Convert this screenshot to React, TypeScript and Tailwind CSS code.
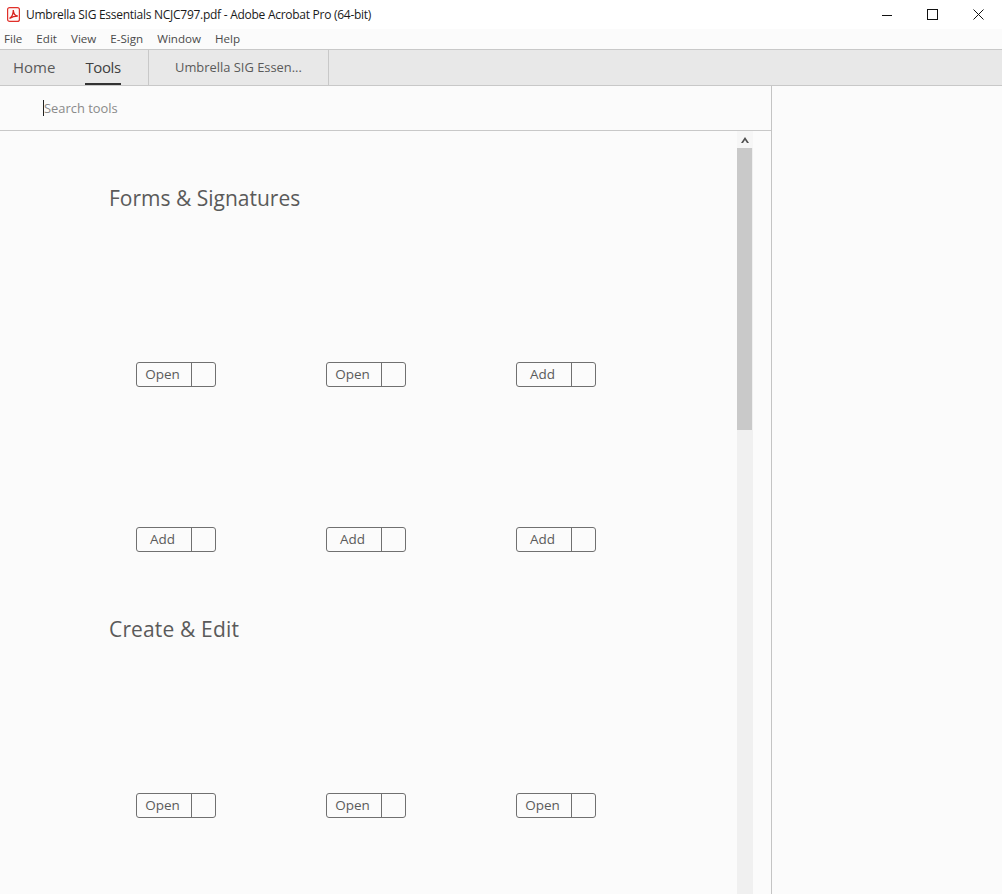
const menus = ['File', 'Edit', 'View', 'E-Sign', 'Window', 'Help']

function SplitButton({ label }: { label: string }) {
  return (
    <div className="flex h-[25px] w-20 rounded-[3px] border border-[#707070] text-[13.500px] leading-[22px] text-[#5a5a5a]">
      <div className="w-[55px] border-r border-[#707070] pr-[3px] text-center">{label}</div>
    </div>
  )
}

function ToolRow({ labels, className }: { labels: string[]; className: string }) {
  return (
    <div className={`flex gap-[110px] pl-[136px] ${className}`}>
      {labels.map((label, index) => (
        <SplitButton key={index} label={label} />
      ))}
    </div>
  )
}

export default function App() {
  return (
    <div className="flex h-[894px] w-[1002px] flex-col overflow-hidden bg-[#fbfbfb] font-['Open_Sans',sans-serif]">
      <div className="flex h-[29px] shrink-0 items-center bg-white">
        <svg className="ml-[7px] h-[15px] w-[13px]" viewBox="0 0 13 15">
          <rect x="0.6" y="0.6" width="11.8" height="13.8" rx="2" fill="#fff8f7" stroke="#e0302a" strokeWidth="1.200" />
          <path
            d="M2.500 11.500c2-1.500 4-4.500 3.800-8.500.2 3.500 2 6 4.500 6-3 0-6 1-8.300 2.500z"
            fill="none"
            stroke="#d8231f"
            strokeWidth="1.300"
          />
        </svg>
        <span className="ml-[6px] text-[12px] tracking-[-0.27px] text-[#1a1a1a]">
          Umbrella SIG Essentials NCJC797.pdf - Adobe Acrobat Pro (64-bit)
        </span>
        <div className="ml-auto flex items-center">
          <svg className="mr-[34px] h-3 w-3" viewBox="0 0 12 12">
            <path d="M1 6.500h10" stroke="#111" />
          </svg>
          <svg className="mr-[35px] h-[11px] w-[11px]" viewBox="0 0 11 11">
            <rect x="0.500" y="0.500" width="10" height="10" fill="none" stroke="#111" />
          </svg>
          <svg className="mr-[18px] h-[11px] w-[11px]" viewBox="0 0 11 11">
            <path d="M0.500 0.500l10 10M10.500 0.500l-10 10" stroke="#111" />
          </svg>
        </div>
      </div>

      <div className="flex h-5 shrink-0 items-center gap-[14px] bg-[#fbfbfb] pl-1 text-[11.600px] text-[#4a4a4a]">
        {menus.map((menu) => (
          <span key={menu}>{menu}</span>
        ))}
      </div>

      <div className="flex h-[37px] shrink-0 border-y border-[#c8c8c8] bg-[#e8e8e8]">
        <div className="flex w-[149px] gap-[30px] border-r border-[#c8c8c8] pl-[13px]">
          <span className="pt-[6px] text-[15px] text-[#5a5a5a]">Home</span>
          <span className="h-[35px] border-b-2 border-[#333] pt-[6px] text-[15px] tracking-[-0.4px] text-[#404040]">
            Tools
          </span>
        </div>
        <div className="w-[180px] border-r border-[#c8c8c8] pl-[26px] pt-2 text-[12.900px] text-[#5a5a5a]">
          Umbrella SIG Essen...
        </div>
      </div>

      <div className="flex min-h-0 flex-1">
        <div className="flex w-[772px] shrink-0 flex-col border-r border-[#c4c4c4]">
          <div className="flex h-[45px] shrink-0 items-center border-b border-[#c8c8c8] pl-[43px]">
            <span className="border-l border-[#222] text-[12.900px] leading-[16px] text-[#8a8a8a]">Search tools</span>
          </div>

          <div className="flex min-h-0 flex-1">
            <div className="w-[737px] shrink-0">
              <h2 className="pl-[109px] pt-[51px] text-[21px] leading-[33px] text-[#5a5a5a]">Forms &amp; Signatures</h2>
              <ToolRow labels={['Open', 'Open', 'Add']} className="mt-[147px]" />
              <ToolRow labels={['Add', 'Add', 'Add']} className="mt-[140px]" />
              <h2 className="pl-[109px] pt-[61px] text-[21px] leading-[33px] tracking-[0.15px] text-[#5a5a5a]">
                Create &amp; Edit
              </h2>
              <ToolRow labels={['Open', 'Open', 'Open']} className="mt-[147px]" />
            </div>
            <div className="flex w-4 shrink-0 flex-col bg-[#f0f0f0]">
              <div className="flex h-[17px] items-center justify-center bg-[#f6f6f6]">
                <svg className="h-[6px] w-2" viewBox="0 0 8 6">
                  <path d="M0 6l4-6 4 6H6L4 3 2 6z" fill="#505050" />
                </svg>
              </div>
              <div className="h-[282px] w-[15px] bg-[#c9c9c9]" />
            </div>
          </div>
        </div>
      </div>
    </div>
  )
}
